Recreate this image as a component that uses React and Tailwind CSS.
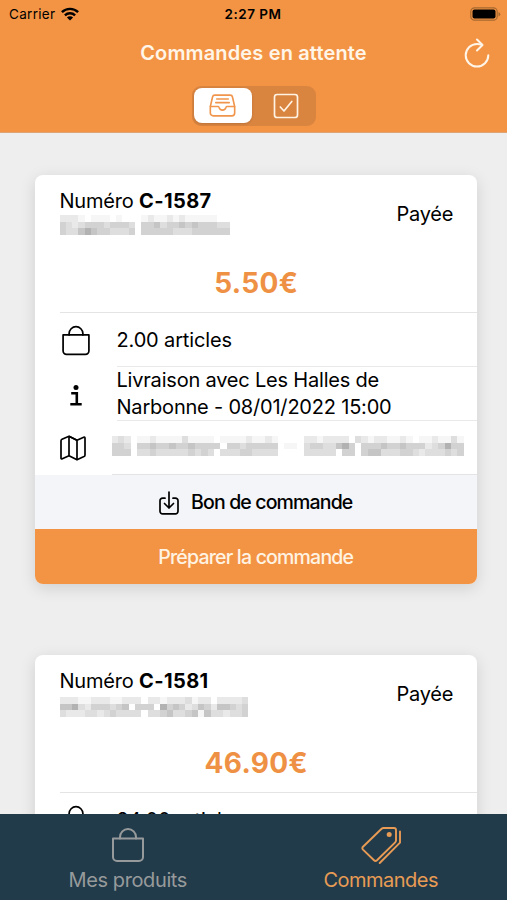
import React from 'react';

const shades = {
  0: 'bg-white',
  1: 'bg-[#f6f6f6]',
  2: 'bg-[#e9e9e9]',
  3: 'bg-[#dedede]',
  4: 'bg-[#d2d2d2]',
  5: 'bg-[#c5c5c5]',
  6: 'bg-[#b2b2b2]',
};

const orders = [
  {
    id: 'C-1587',
    status: 'Payée',
    price: '5.50€',
    articles: '2.00 articles',
    delivery: ['Livraison avec Les Halles de', 'Narbonne - 08/01/2022 15:00'],
    address: [
      '2320112111131111011112112100002212222032122112101121131',
      '4430445445445444404434444401103443356404445445444234644',
      '4440334333334343033344333300003333304404553334432333434',
    ],
    nameClass: 'w-[170px]',
    name: [
      '222101110100012112121111100',
      '432344434443044534454544433',
      '433565443334044444333444444',
    ],
  },
  {
    id: 'C-1581',
    status: 'Payée',
    price: '46.90€',
    articles: '24.00 articles',
    nameClass: 'w-[189px] mt-[2px]',
    name: [
      '222112221122202212223122022223',
      '556324443450444064542354255434',
      '322233234333303345334515332334',
    ],
  },
];

const Mosaic = ({ rows, className }) => (
  <div className={`flex h-5 flex-col ${className}`} aria-hidden="true">
    {rows.map((row, i) => (
      <div key={i} className="flex flex-1">
        {row.split('').map((level, j) => (
          <span key={j} className={`flex-1 ${shades[level]}`} />
        ))}
      </div>
    ))}
  </div>
);

const BagIcon = ({ className, strokeWidth = 2 }) => (
  <svg viewBox="0 0 34 36" className={className} fill="none" stroke="currentColor" strokeWidth={strokeWidth} strokeLinejoin="round" strokeLinecap="round">
    <path d="M2 11.5h30v18.5a4 4 0 0 1-4 4H6a4 4 0 0 1-4-4z" />
    <path d="M9 11.5V10a8 8 0 0 1 16 0v1.5" />
  </svg>
);

const InfoIcon = () => (
  <svg viewBox="0 0 12 21" className="h-[21px] w-3" fill="none" stroke="currentColor" strokeWidth="2.6">
    <circle cx="6" cy="2.5" r="2.5" fill="currentColor" stroke="none" />
    <path d="M1.2 8.2h5.6v11M.3 19.2h11.4" />
  </svg>
);

const MapIcon = () => (
  <svg viewBox="0 0 26 26" className="h-[26px] w-[26px]" fill="none" stroke="currentColor" strokeWidth="1.7" strokeLinejoin="round">
    <path d="M9 1.3 2 4.2Q1 4.7 1 5.8V23q0 1.4 1.3.8L9 20.8l8 4 7-3.2q1-.5 1-1.6V3q0-1.4-1.3-.8L17 5.2z" />
    <path d="M9 1.3v19.5M17 5.2v19.6M9 1.3l8 3.9" />
  </svg>
);

const DownloadIcon = () => (
  <svg viewBox="0 0 20 24" className="h-6 w-5" fill="none" stroke="currentColor" strokeWidth="1.7" strokeLinecap="round" strokeLinejoin="round">
    <path d="M6 7.2H3.6A2.6 2.6 0 0 0 1 9.8v10.4a2.6 2.6 0 0 0 2.6 2.6h12.8a2.6 2.6 0 0 0 2.6-2.6V9.8a2.6 2.6 0 0 0-2.6-2.6H14" />
    <path d="M10 1v16M5.5 12.5 10 17l4.5-4.5" />
  </svg>
);

const TrayIcon = () => (
  <svg viewBox="0 0 28 24" className="h-[23px] w-[27px]" fill="none" stroke="currentColor" strokeWidth="1.7" strokeLinecap="round" strokeLinejoin="round">
    <path d="M6 1.2h16a2.4 2.4 0 0 1 2.4 1.9L26.7 13v6.8a3 3 0 0 1-3 3H4.3a3 3 0 0 1-3-3V13L3.6 3.1A2.4 2.4 0 0 1 6 1.2z" />
    <path d="M1.5 13h8c.6 0 .8.5.9 1a3.7 3.7 0 0 0 7.2 0c.1-.5.3-1 .9-1h8M8 5.2h12M7 9h14" />
  </svg>
);

const CheckboxIcon = () => (
  <svg viewBox="0 0 26 26" className="h-[26px] w-[26px]" fill="none" stroke="currentColor" strokeWidth="1.7" strokeLinecap="round" strokeLinejoin="round">
    <rect x="1.5" y="1.5" width="23" height="23" rx="2.6" />
    <path d="m7.3 14 3.7 4 7.8-9.5" />
  </svg>
);

const RefreshIcon = () => (
  <svg viewBox="0 0 26 30" className="h-[30px] w-[26px]" fill="none" stroke="currentColor" strokeWidth="2" strokeLinecap="round" strokeLinejoin="round">
    <path d="M18 6.8Q15.500 6 13 6A11.300 11.300 0 1 0 24.300 17.300" />
    <path d="m13 1.500 5.500 5.500-5.500 5.500" />
  </svg>
);

const TagsIcon = () => (
  <svg viewBox="0 0 40 38" className="h-[38px] w-10" fill="none" stroke="currentColor" strokeWidth="1.9" strokeLinecap="round" strokeLinejoin="round">
    <path d="M22.5 2H33a2 2 0 0 1 2 2v10.500q0 1-.8 1.800L16 34.200q-1.500 1.400-3 0L2 23.600q-1.300-1.400 0-2.900L20.600 2.800Q21.400 2 22.500 2z" />
    <path d="M39 5.500v11.200L18.700 37" />
    <circle cx="28.200" cy="8.500" r="2.500" fill="currentColor" stroke="none" />
  </svg>
);

const WifiIcon = () => (
  <svg viewBox="0 0 18 14" className="h-[14px] w-[18px]" fill="none" stroke="currentColor" strokeWidth="2.4">
    <path d="M.9 5.200a11.600 11.600 0 0 1 16.200 0M3.900 8.400a7.300 7.300 0 0 1 10.200 0" />
    <path d="M9 13.600 5.900 10.500a4.400 4.400 0 0 1 6.200 0z" fill="currentColor" stroke="none" />
  </svg>
);

const BatteryIcon = () => (
  <svg viewBox="0 0 31 14" className="h-[14px] w-[31px]">
    <rect x=".8" y=".8" width="26.400" height="12.400" rx="3.800" fill="none" stroke="#a7682f" strokeWidth="1.200" />
    <rect x="2.500" y="2.500" width="23" height="9" rx="2" fill="#000" />
    <path d="M28.500 5v4.400q1.800-.8 1.800-2.200T28.500 5z" fill="#a7682f" />
  </svg>
);

const OrderDetails = ({ order }) => (
  <>
    <div className="flex h-[54px] items-stretch pl-[25px]">
      <div className="flex w-[57px] items-center pl-[10px] pt-[2px]">
        <InfoIcon />
      </div>
      <div className="flex-1 whitespace-nowrap border-b border-[#e9e9e9] text-[20px] leading-[27px] tracking-[-0.2px]">
        {order.delivery.map((line) => (
          <div key={line}>{line}</div>
        ))}
      </div>
    </div>
    <div className="flex h-[54px] items-stretch pl-[25px]">
      <div className="flex w-[52px] items-center">
        <MapIcon />
      </div>
      <div className="flex flex-1 items-start border-b border-[#e4e4e4] pt-[15px]">
        <Mosaic rows={order.address} className="w-[352px]" />
      </div>
    </div>
    <button className="flex h-[54px] w-full items-center justify-center gap-3 bg-[#f3f5f9] pt-px text-[19.5px] font-medium tracking-[-0.85px]">
      <DownloadIcon />
      Bon de commande
    </button>
    <button className="flex h-[54.5px] w-full items-center justify-center bg-[#f39445] pt-[2px] text-[19.5px] font-medium tracking-[-0.8px] text-[#fff3e3]">
      Préparer la commande
    </button>
  </>
);

const OrderCard = ({ order }) => (
  <article className="shrink-0 overflow-hidden rounded-lg bg-white text-black shadow-[0_4px_16px_rgba(0,0,0,0.13)]">
    <div className="flex h-[84px] items-start justify-between pl-[25px] pr-6">
      <div className="pt-3">
        <h2 className="whitespace-nowrap text-[20px] leading-7 tracking-[-0.2px]">
          Numéro <span className="font-bold tracking-[0.4px]">{order.id}</span>
        </h2>
        <Mosaic rows={order.name} className={order.nameClass} />
      </div>
      <span className="pt-[25px] text-[20px] leading-7 tracking-[-0.3px]">{order.status}</span>
    </div>
    <div className="ml-[25px] h-[54px] border-b border-[#e4e4e4] pr-6 text-center text-[28px] font-bold leading-[48px] tracking-[0.3px] text-[#ef9144]">
      {order.price}
    </div>
    <div className="flex h-[54px] items-stretch pl-[25px]">
      <div className="flex w-[57px] items-center pl-[1px]">
        <BagIcon className="h-[31px] w-[30px]" />
      </div>
      <div className="flex flex-1 items-center border-b border-[#e9e9e9] text-[20px] tracking-[-0.15px]">{order.articles}</div>
    </div>
    {order.delivery && <OrderDetails order={order} />}
  </article>
);

const App = () => {
  return (
    <div className="flex h-[900px] w-[507px] flex-col overflow-hidden bg-[#eeeeee] font-['Inter',sans-serif]">
      <header className="h-[133px] shrink-0 border-b border-[#dfa476] bg-[#f39445]">
        <div className="grid h-7 grid-cols-3 items-center pl-[9px] pr-[6px] text-[13.5px] text-black">
          <div className="flex items-center gap-[6px] tracking-[0.3px]">
            Carrier
            <WifiIcon />
          </div>
          <div className="pr-1 text-center font-semibold tracking-[0.5px]">2:27 PM</div>
          <div className="flex justify-end">
            <BatteryIcon />
          </div>
        </div>
        <div className="grid h-[50px] grid-cols-[60px_1fr_60px] items-center text-[#fff5e8]">
          <h1 className="col-start-2 whitespace-nowrap pb-px text-center text-[20px] font-semibold tracking-[0.15px]">Commandes en attente</h1>
          <button className="flex justify-end pb-px pr-[17px]">
            <RefreshIcon />
          </button>
        </div>
        <div className="mx-auto mt-2 flex h-10 w-[124px] rounded-[9px] bg-[#d9843f] p-[2px]">
          <button className="flex h-[35px] w-[58px] items-center justify-center rounded-[8px] bg-white text-[#f0954b] shadow-sm">
            <TrayIcon />
          </button>
          <button className="flex flex-1 items-center justify-center pl-[6px] text-[#fff3e3]">
            <CheckboxIcon />
          </button>
        </div>
      </header>
      <main className="flex min-h-0 flex-1 flex-col gap-[71.5px] overflow-hidden pl-[34.5px] pr-[30px] pt-[42px]">
        {orders.map((order) => (
          <OrderCard key={order.id} order={order} />
        ))}
      </main>
      <nav className="grid h-[86px] shrink-0 grid-cols-2 bg-[#223b4a] text-[20px] tracking-[-0.4px]">
        <button className="flex flex-col items-center pl-[2px] pt-[13px] text-[#979a9b]">
          <BagIcon className="h-[36px] w-[34px]" />
          <span className="mt-[3px] leading-7">Mes produits</span>
        </button>
        <button className="flex flex-col items-center pl-[1px] pt-[12px] text-[#e89b54]">
          <TagsIcon />
          <span className="mt-[2px] leading-7 tracking-[-0.5px]">Commandes</span>
        </button>
      </nav>
    </div>
  );
};

export default App;
